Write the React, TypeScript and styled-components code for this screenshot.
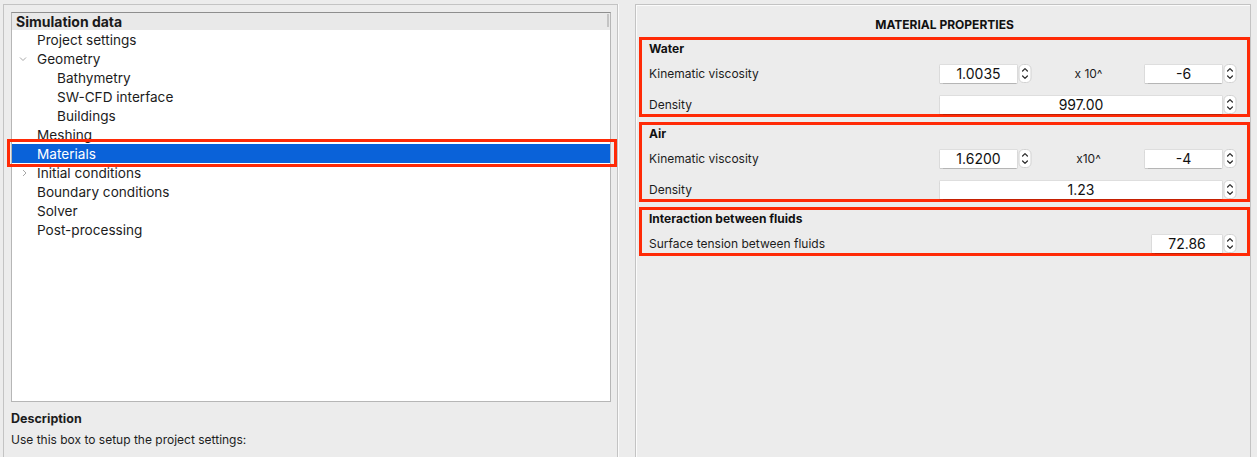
import React from "react";
import styled, { createGlobalStyle } from "styled-components";

const GlobalStyle = createGlobalStyle`
  html, body { margin: 0; padding: 0; background: #ececec; overflow: hidden; }
  body {
    font-family: Inter, "Noto Sans", "Liberation Sans", sans-serif;
    color: #1c1c1c;
    -webkit-font-smoothing: antialiased;
  }
`;

const RED = "#ff2a06";

const Window = styled.div`
  display: flex;
  gap: 17px;
  padding: 4px 6px 0 3px;
  height: 457px;
  box-sizing: border-box;
`;

const LeftPanel = styled.section`
  width: 615px;
  box-sizing: border-box;
  border: 1px solid #c3c3c3;
  border-bottom: none;
  box-shadow: 1px 0 0 #fbfbfb;
  padding: 7px 6px 0 7px;
  display: flex;
  flex-direction: column;
`;

const Tree = styled.div`
  height: 390px;
  box-sizing: border-box;
  background: #fff;
  border: 1px solid #b6b6b6;
  border-top-color: #8e8e8e;
  position: relative;
`;

const TreeHeader = styled.div`
  position: relative;
  height: 17px;
  line-height: 17px;
  background: #e9e9e9;
  font-size: 14px;
  font-weight: 700;
  padding-left: 4px;
  color: #1a1a1a;
  &::after {
    content: "";
    position: absolute;
    right: 1px;
    top: 1px;
    bottom: 3px;
    width: 2px;
    background: #c4c4c4;
  }
`;

const Row = styled.div<{ $level: number; $selected?: boolean; $marked?: boolean }>`
  position: relative;
  display: flex;
  align-items: center;
  height: 19px;
  font-size: 13.6px;
  padding-left: ${(p) => 7 + (p.$level - 1) * 20}px;
  background: ${(p) => (p.$selected ? "#0a62d9" : "transparent")};
  color: ${(p) => (p.$selected ? "#ffffff" : "#1c1c1c")};
  ${(p) =>
    p.$marked
      ? `&::after {
          content: "";
          position: absolute;
          left: -5px;
          right: -7px;
          top: -5px;
          bottom: -4px;
          border: 3px solid ${RED};
          pointer-events: none;
        }`
      : ""}
`;

const Twisty = styled.span`
  display: inline-flex;
  align-items: center;
  width: 18px;
  height: 19px;
  flex: none;
`;

const DescTitle = styled.div`
  margin-top: 9px;
  font-size: 12.5px;
  font-weight: 700;
  line-height: 16px;
`;

const DescText = styled.div`
  margin-top: 5px;
  font-size: 12px;
  line-height: 16px;
`;

const RightPanel = styled.section`
  width: 616px;
  box-sizing: border-box;
  border: 1px solid #c3c3c3;
  border-bottom: none;
  box-shadow: inset 1px 1px 0 #fbfbfb;
  padding: 12px 0 0 3px;
  display: flex;
  flex-direction: column;
  gap: 5px;
`;

const PanelTitle = styled.h2`
  margin: 0 0 -1px;
  height: 16px;
  line-height: 16px;
  text-align: center;
  font-size: 12px;
  font-weight: 700;
  color: #111;
`;

const Group = styled.div`
  border: 3px solid ${RED};
  padding: 0 10px 0 7px;
  display: flex;
  flex-direction: column;
`;

const GroupTitle = styled.div`
  height: 17px;
  line-height: 17px;
  font-size: 12px;
  font-weight: 700;
  color: #111;
`;

const Rows = styled.div`
  display: flex;
  flex-direction: column;
  gap: 12px;
  margin-top: 7px;
`;

const FieldRow = styled.div`
  display: flex;
  align-items: center;
  height: 19px;
`;

const Label = styled.span`
  flex: 1;
  font-size: 12px;
  color: #1c1c1c;
`;

const Controls = styled.div<{ $mode: "triple" | "single" | "end" }>`
  width: 297px;
  display: ${(p) => (p.$mode === "triple" ? "grid" : "flex")};
  grid-template-columns: 92px 1fr 92px;
  justify-content: ${(p) => (p.$mode === "end" ? "flex-end" : "stretch")};
  align-items: center;
`;

const Multiplier = styled.span`
  text-align: center;
  font-size: 12px;
  color: #1c1c1c;
`;

const Spin = styled.div<{ $width?: number }>`
  display: flex;
  align-items: center;
  height: 19px;
  width: ${(p) => (p.$width ? `${p.$width}px` : "100%")};
`;

const Field = styled.div`
  flex: 1;
  height: 18px;
  line-height: 18px;
  background: #fff;
  box-shadow: 0 0 0 0.5px rgba(0, 0, 0, 0.12), 0 0.5px 1px rgba(0, 0, 0, 0.18);
  text-align: center;
  font-size: 14px;
  color: #111;
`;

const StepperBox = styled.span`
  display: inline-flex;
  width: 14px;
  height: 19px;
  margin-left: 1px;
  flex: none;
`;

const Stepper = () => (
  <StepperBox>
    <svg width="14" height="19" viewBox="0 0 14 19">
      <rect x="1" y="0.5" width="12" height="18" rx="4.5" fill="#fff" stroke="#d2d2d2" />
      <path d="M4.6 7 L7 4.6 L9.4 7" fill="none" stroke="#2a2a2a" strokeWidth="1.2" strokeLinecap="round" strokeLinejoin="round" />
      <path d="M4.6 12 L7 14.4 L9.4 12" fill="none" stroke="#2a2a2a" strokeWidth="1.2" strokeLinecap="round" strokeLinejoin="round" />
    </svg>
  </StepperBox>
);

const SpinBox = ({ value, width }: { value: string; width?: number }) => (
  <Spin $width={width}>
    <Field>{value}</Field>
    <Stepper />
  </Spin>
);

const ChevronDown = () => (
  <svg width="8" height="6" viewBox="0 0 8 6">
    <path d="M1 1.5 L4 4.5 L7 1.5" fill="none" stroke="#a8a8a8" strokeWidth="1" />
  </svg>
);

const ChevronRight = () => (
  <svg width="8" height="8" viewBox="0 0 8 8" style={{ marginLeft: 2 }}>
    <path d="M2 1 L5 4 L2 7" fill="none" stroke="#a8a8a8" strokeWidth="1" />
  </svg>
);

type Item = { label: string; level: number; twisty?: "open" | "closed"; selected?: boolean };

const items: Item[] = [
  { label: "Project settings", level: 1 },
  { label: "Geometry", level: 1, twisty: "open" },
  { label: "Bathymetry", level: 2 },
  { label: "SW-CFD interface", level: 2 },
  { label: "Buildings", level: 2 },
  { label: "Meshing", level: 1 },
  { label: "Materials", level: 1, selected: true },
  { label: "Initial conditions", level: 1, twisty: "closed" },
  { label: "Boundary conditions", level: 1 },
  { label: "Solver", level: 1 },
  { label: "Post-processing", level: 1 },
];

const ViscosityRow = ({ value, mult, exp }: { value: string; mult: string; exp: string }) => (
  <FieldRow>
    <Label>Kinematic viscosity</Label>
    <Controls $mode="triple">
      <SpinBox value={value} />
      <Multiplier>{mult}</Multiplier>
      <SpinBox value={exp} />
    </Controls>
  </FieldRow>
);

const DensityRow = ({ value }: { value: string }) => (
  <FieldRow>
    <Label>Density</Label>
    <Controls $mode="single">
      <SpinBox value={value} />
    </Controls>
  </FieldRow>
);

export default function App() {
  return (
    <>
      <GlobalStyle />
      <Window>
        <LeftPanel>
          <Tree>
            <TreeHeader>Simulation data</TreeHeader>
            {items.map((it) => (
              <Row key={it.label} $level={it.level} $selected={it.selected} $marked={it.selected}>
                <Twisty>
                  {it.twisty === "open" && <ChevronDown />}
                  {it.twisty === "closed" && <ChevronRight />}
                </Twisty>
                {it.label}
              </Row>
            ))}
          </Tree>
          <DescTitle>Description</DescTitle>
          <DescText>Use this box to setup the project settings:</DescText>
        </LeftPanel>
        <RightPanel>
          <PanelTitle>MATERIAL PROPERTIES</PanelTitle>
          <Group>
            <GroupTitle>Water</GroupTitle>
            <Rows>
              <ViscosityRow value="1.0035" mult="x 10^" exp="-6" />
              <DensityRow value="997.00" />
            </Rows>
          </Group>
          <Group>
            <GroupTitle>Air</GroupTitle>
            <Rows>
              <ViscosityRow value="1.6200" mult="x10^" exp="-4" />
              <DensityRow value="1.23" />
            </Rows>
          </Group>
          <Group>
            <GroupTitle>Interaction between fluids</GroupTitle>
            <Rows>
              <FieldRow>
                <Label>Surface tension between fluids</Label>
                <Controls $mode="end">
                  <SpinBox value="72.86" width={85} />
                </Controls>
              </FieldRow>
            </Rows>
          </Group>
        </RightPanel>
      </Window>
    </>
  );
}
